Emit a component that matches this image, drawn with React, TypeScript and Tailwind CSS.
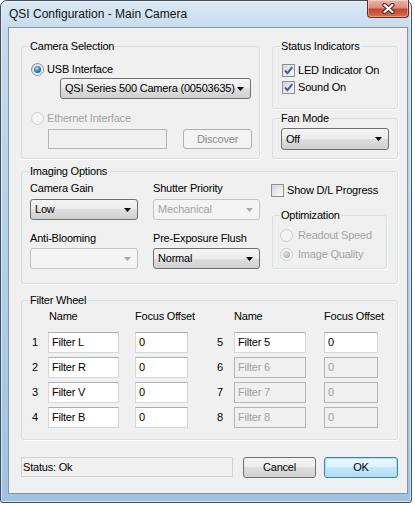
import type { ReactNode } from 'react';
import clsx from 'clsx';

function Arrow({ disabled }: { disabled?: boolean }) {
  return (
    <svg width="7" height="4" viewBox="0 0 7 4" className="shrink-0">
      <path d="M0 0h7L3.5 4z" fill={disabled ? '#a8a8a8' : '#000'} />
    </svg>
  );
}

function Combo({ value, className, disabled }: { value?: string; className: string; disabled?: boolean }) {
  return (
    <div
      className={clsx(
        'flex items-center justify-between rounded-[3px] border pl-[4px] pr-[6px]',
        disabled
          ? 'border-[#c2c5c8] bg-[#f4f4f4] text-[#a3a3a3]'
          : 'border-[#707070] bg-[linear-gradient(#f4f4f4_0%,#ececec_50%,#dfdfdf_50%,#d0d0d0_100%)] text-black',
        className,
      )}
    >
      <span>{value}</span>
      <Arrow disabled={disabled} />
    </div>
  );
}

function Radio({ checked, disabled }: { checked?: boolean; disabled?: boolean }) {
  return (
    <span
      className={clsx(
        'flex h-[13px] w-[13px] shrink-0 items-center justify-center rounded-full border',
        disabled ? 'border-[#cacdd0] bg-[#f4f4f4]' : 'border-[#8e8f8f] bg-[linear-gradient(135deg,#cfd3d8,#ffffff)]',
      )}
    >
      {checked && (
        <span
          className={clsx(
            'h-[7px] w-[7px] rounded-full',
            disabled
              ? 'bg-[radial-gradient(circle_at_40%_35%,#e0e0e0,#a3a3a3)]'
              : 'bg-[radial-gradient(circle_at_40%_35%,#9fdcff,#2277b8_55%,#0b3d68)]',
          )}
        />
      )}
    </span>
  );
}

function Check({ checked }: { checked?: boolean }) {
  return (
    <span className="flex h-[13px] w-[13px] shrink-0 items-center justify-center border border-[#8e8f8f] bg-[linear-gradient(135deg,#d2d5da,#fbfbfb)]">
      {checked && (
        <svg width="11" height="11" viewBox="0 0 11 11">
          <path d="M2 5.5 L4.5 8.2 L9.3 2.2" fill="none" stroke="#4a5c98" strokeWidth="2" />
        </svg>
      )}
    </span>
  );
}

function Field({ value, className, disabled }: { value?: string; className: string; disabled?: boolean }) {
  return (
    <div
      className={clsx(
        'flex items-center border pl-[3px]',
        disabled
          ? 'border-[#b3b6b9] bg-[#f0f0f0] text-[#a0a0a0]'
          : 'border-[#d3d6db] border-t-[#abadb3] bg-white text-black',
        className,
      )}
    >
      {value}
    </div>
  );
}

function Btn({ children, className, disabled, primary }: { children: ReactNode; className: string; disabled?: boolean; primary?: boolean }) {
  return (
    <div
      className={clsx(
        'flex items-center justify-center rounded-[3px] border',
        disabled && 'border-[#adb2b5] bg-[#f4f4f4] text-[#8a8a8a]',
        primary &&
          'border-[#3c7fb1] bg-[linear-gradient(#ecf7fd_0%,#ddf1fc_50%,#c4e8fc_50%,#afdcf6_100%)] shadow-[inset_0_0_0_1px_#a8e2fa]',
        !disabled && !primary && 'border-[#707070] bg-[linear-gradient(#f4f4f4_0%,#ececec_50%,#dfdfdf_50%,#d0d0d0_100%)]',
        className,
      )}
    >
      {children}
    </div>
  );
}

function Group({ title, className, children }: { title: string; className: string; children: ReactNode }) {
  return (
    <div className={clsx('relative rounded-[3px] border border-[#d5dfe5] shadow-[1px_1px_0_#ffffff]', className)}>
      <span className="absolute left-[7px] top-[-7px] bg-[#f0f0f0] px-[1px] leading-[13px] text-black">{title}</span>
      {children}
    </div>
  );
}

interface FilterItem {
  num: number;
  name: string;
  offset: string;
  disabled?: boolean;
}

const leftFilters: FilterItem[] = [
  { num: 1, name: 'Filter L', offset: '0' },
  { num: 2, name: 'Filter R', offset: '0' },
  { num: 3, name: 'Filter V', offset: '0' },
  { num: 4, name: 'Filter B', offset: '0' },
];

const rightFilters: FilterItem[] = [
  { num: 5, name: 'Filter 5', offset: '0' },
  { num: 6, name: 'Filter 6', offset: '0', disabled: true },
  { num: 7, name: 'Filter 7', offset: '0', disabled: true },
  { num: 8, name: 'Filter 8', offset: '0', disabled: true },
];

function FilterBlock({ items, right }: { items: FilterItem[]; right?: boolean }) {
  return (
    <div className={clsx('flex flex-col', right ? 'ml-[29px] w-[161px]' : 'w-[156px]')}>
      <div className="flex">
        <span className={right ? 'w-[17px]' : 'w-[16px]'} />
        <span className={right ? 'w-[72px]' : 'w-[71px] pl-[1px]'}>Name</span>
        <span className={clsx('whitespace-nowrap', right ? 'ml-[18px] w-[54px]' : 'ml-[16px] w-[53px]')}>Focus Offset</span>
      </div>
      <div className="mt-[9px] flex flex-col gap-[4px]">
        {items.map((f) => (
          <div key={f.num} className="flex h-[21px] items-center">
            <span className={right ? 'w-[17px]' : 'w-[16px]'}>{f.num}</span>
            <Field value={f.name} disabled={f.disabled} className={right ? 'h-full w-[72px]' : 'h-full w-[71px]'} />
            <Field
              value={f.offset}
              disabled={f.disabled}
              className={right ? 'ml-[18px] h-full w-[54px]' : 'ml-[16px] h-full w-[53px]'}
            />
          </div>
        ))}
      </div>
    </div>
  );
}

export default function App() {
  return (
    <div className="min-h-screen bg-white font-['Liberation_Sans',Arial,sans-serif] text-[11px] leading-[13px] tracking-[-0.2px] text-black">
      <div className="relative flex h-[503px] w-[412px] flex-col rounded-t-[7px] rounded-b-[3px] border border-[#3f4f5f] bg-[linear-gradient(180deg,#dce9f4_0%,#c4daec_6%,#b2cfe6_55%,#9fc3df_100%)] pb-[8px] pl-[7px] pr-[3px] shadow-[inset_0_0_0_1px_rgba(255,255,255,0.55)]">
        {/* Title bar */}
        <div className="flex h-[26px] items-center pl-[1px] pt-[1px] text-[12px] tracking-normal text-[#111]">
          QSI Configuration - Main Camera
        </div>
        <div className="absolute right-[2px] top-[-1px] flex h-[18px] w-[42px] items-center justify-center rounded-b-[4px] border border-t-0 border-[#6b2a22] bg-[linear-gradient(180deg,#ebb4a9_0%,#dc8e80_45%,#c4472f_55%,#d4704f_100%)] shadow-[inset_0_0_0_1px_rgba(255,255,255,0.35)]">
          <svg width="15" height="11" viewBox="0 0 15 11">
            <path d="M3.5 2 L11.5 9 M11.5 2 L3.5 9" stroke="#4a1d18" strokeWidth="4.2" strokeLinecap="round" />
            <path d="M3.5 2 L11.5 9 M11.5 2 L3.5 9" stroke="#fff" strokeWidth="2.3" strokeLinecap="round" />
          </svg>
        </div>

        {/* Client area */}
        <div className="h-[467px] w-[400px] border border-[#8395a5] bg-[#f0f0f0] pl-[12px] pt-[18px]">
          <div className="flex gap-[12px]">
            <Group title="Camera Selection" className="h-[113px] w-[239px] pl-[9px] pt-[16px]">
              <div className="flex items-center">
                <Radio checked />
                <span className="ml-[3px]">USB Interface</span>
              </div>
              <Combo value="QSI Series 500 Camera (00503635)" className="ml-[29px] mt-[2px] h-[21px] w-[191px]" />
              <div className="mt-[13px] flex items-center text-[#a3a3a3]">
                <Radio disabled />
                <span className="ml-[3px]">Ethernet Interface</span>
              </div>
              <div className="ml-[17px] mt-[4px] flex">
                <Field disabled className="h-[20px] w-[119px]" />
                <Btn disabled className="ml-[16px] h-[20px] w-[69px]">
                  Discover
                </Btn>
              </div>
            </Group>

            <div className="flex w-[126px] flex-col">
              <Group title="Status Indicators" className="h-[63px] pl-[9px] pt-[17px]">
                <div className="flex items-center">
                  <Check checked />
                  <span className="ml-[3px]">LED Indicator On</span>
                </div>
                <div className="mt-[4px] flex items-center">
                  <Check checked />
                  <span className="ml-[3px]">Sound On</span>
                </div>
              </Group>
              <Group title="Fan Mode" className="mt-[9px] h-[41px] pl-[8px] pt-[9px]">
                <Combo value="Off" className="h-[22px] w-[108px]" />
              </Group>
            </div>
          </div>

          <Group title="Imaging Options" className="mt-[12px] flex h-[113px] w-[377px] pl-[8px] pt-[10px]">
            <div className="flex w-[108px] flex-col">
              <span>Camera Gain</span>
              <Combo value="Low" className="mt-[4px] h-[21px]" />
              <span className="mt-[12px]">Anti-Blooming</span>
              <Combo disabled className="mt-[3px] h-[21px]" />
            </div>
            <div className="ml-[15px] flex w-[107px] flex-col">
              <span>Shutter Priority</span>
              <Combo disabled value="Mechanical" className="mt-[4px] h-[21px]" />
              <span className="mt-[12px]">Pre-Exposure Flush</span>
              <Combo value="Normal" className="mt-[3px] h-[21px]" />
            </div>
            <div className="ml-[11px] flex flex-col">
              <div className="mt-[2px] flex items-center">
                <Check />
                <span className="ml-[3px]">Show D/L Progress</span>
              </div>
              <Group title="Optimization" className="ml-[1px] mt-[18px] h-[54px] w-[115px] pl-[7px] pt-[13px] text-[#a3a3a3]">
                <div className="flex items-center">
                  <Radio disabled />
                  <span className="ml-[5px]">Readout Speed</span>
                </div>
                <div className="mt-[6px] flex items-center">
                  <Radio disabled checked />
                  <span className="ml-[5px]">Image Quality</span>
                </div>
              </Group>
            </div>
          </Group>

          <Group title="Filter Wheel" className="mt-[16px] flex h-[140px] w-[377px] pl-[10px] pt-[9px]">
            <FilterBlock items={leftFilters} />
            <FilterBlock items={rightFilters} right />
          </Group>

          <div className="mt-[17px] flex">
            <div className="flex h-[20px] w-[212px] items-center border border-[#d2d2d2] pl-[1px]">Status: Ok</div>
            <Btn className="ml-[10px] h-[21px] w-[73px]">Cancel</Btn>
            <Btn primary className="ml-[8px] h-[21px] w-[74px]">
              OK
            </Btn>
          </div>
        </div>
      </div>
    </div>
  );
}
